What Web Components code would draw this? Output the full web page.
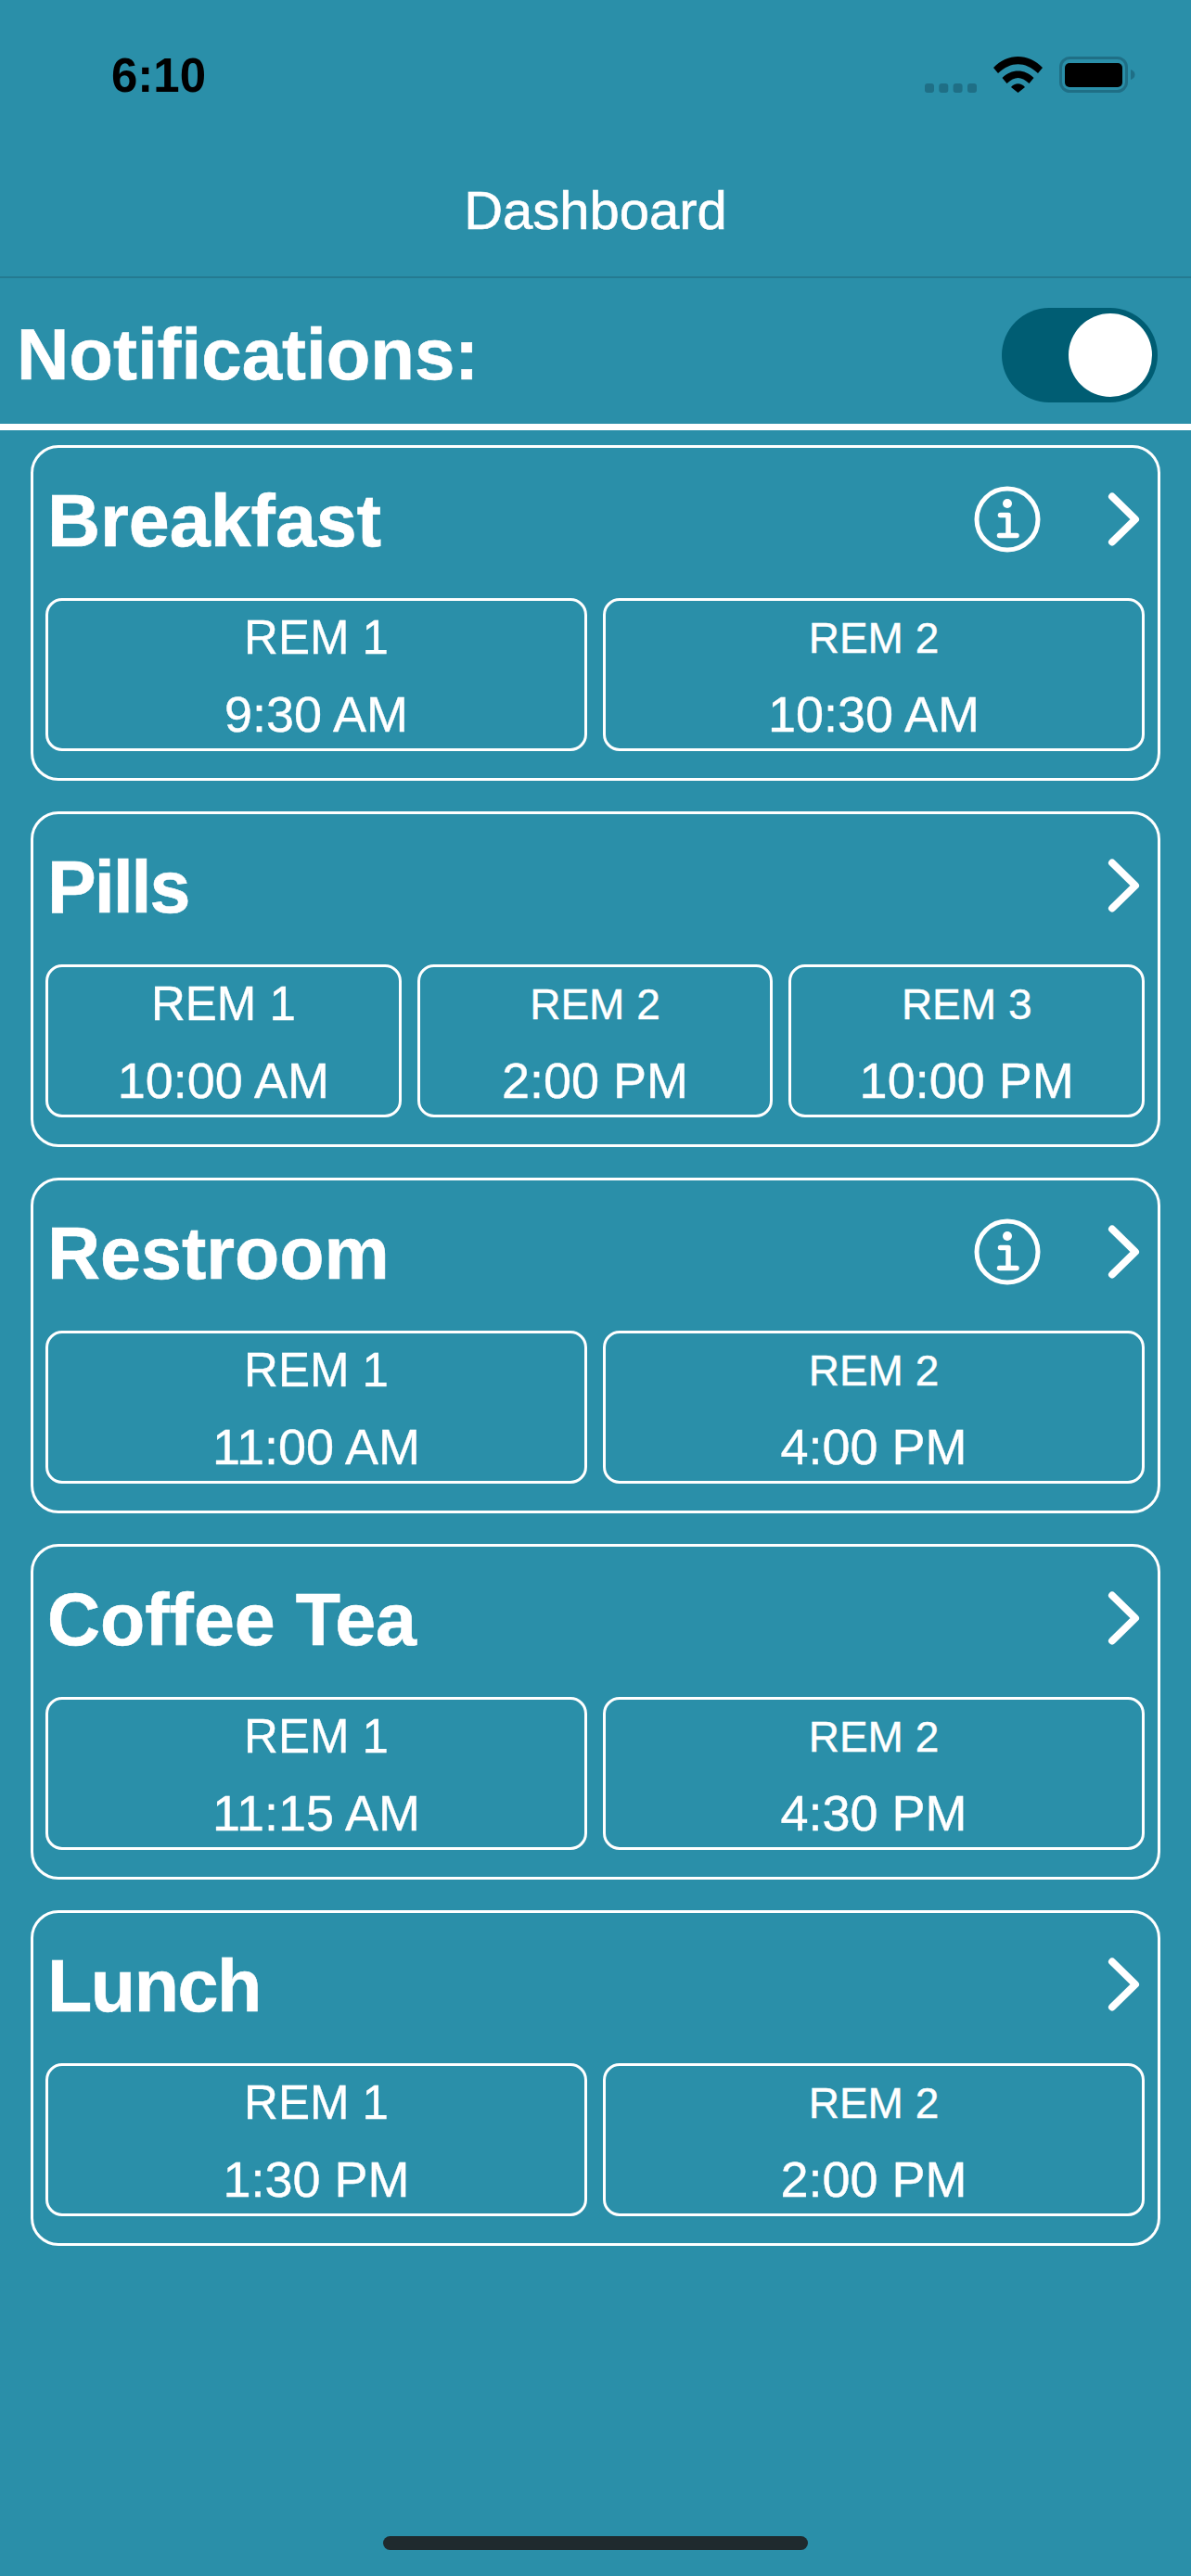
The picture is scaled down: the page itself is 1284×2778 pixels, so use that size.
<!DOCTYPE html>
<html>
<head>
<meta charset="utf-8">
<style>
html,body{margin:0;padding:0;height:100%;}
body{background:#2a8fa9;color:#fff;font-family:"Liberation Sans",Arial,sans-serif;}
</style>
</head>
<body>
<status-bar></status-bar>
<nav-bar>Dashboard</nav-bar>
<notify-row>Notifications:</notify-row>
<main style="display:block;padding:16px 33px 0 33px;">
  <meal-card name="Breakfast" info>
    <rem-box label="REM 1" time="9:30 AM"></rem-box>
    <rem-box label="REM 2" time="10:30 AM" small></rem-box>
  </meal-card>
  <meal-card name="Pills" style="--track:-2px">
    <rem-box label="REM 1" time="10:00 AM"></rem-box>
    <rem-box label="REM 2" time="2:00 PM" small></rem-box>
    <rem-box label="REM 3" time="10:00 PM" small></rem-box>
  </meal-card>
  <meal-card name="Restroom" info>
    <rem-box label="REM 1" time="11:00 AM"></rem-box>
    <rem-box label="REM 2" time="4:00 PM" small></rem-box>
  </meal-card>
  <meal-card name="Coffee Tea">
    <rem-box label="REM 1" time="11:15 AM"></rem-box>
    <rem-box label="REM 2" time="4:30 PM" small></rem-box>
  </meal-card>
  <meal-card name="Lunch" style="--track:-1.4px">
    <rem-box label="REM 1" time="1:30 PM"></rem-box>
    <rem-box label="REM 2" time="2:00 PM" small></rem-box>
  </meal-card>
</main>
<home-bar></home-bar>
<script>
class StatusBar extends HTMLElement{
  constructor(){
    super();
    this.attachShadow({mode:"open"});
    this.shadowRoot.innerHTML = `
    <style>
    :host{display:flex;height:132px;align-items:flex-start;justify-content:space-between;box-sizing:border-box;padding:56px 60px 0 120px;}
    .time{font:bold 51px/52px "Liberation Sans",Arial,sans-serif;color:#000;}
    .icons{display:flex;align-items:flex-start;gap:18px;margin-top:5px;}
    svg{display:block;}
    </style>
    <div class="time">6:10</div>
    <div class="icons">
      <svg width="56" height="39" viewBox="0 0 56 39">
        <g fill="#1f6f86"><rect x="0" y="29" width="10" height="10" rx="3"/><rect x="15.300" y="29" width="10" height="10" rx="3"/><rect x="30.600" y="29" width="10" height="10" rx="3"/><rect x="46" y="29" width="10" height="10" rx="3"/></g>
      </svg>
      <svg width="53" height="39" viewBox="0 0 53 39">
        <path d="M0 12 C15 -4 38 -4 53 12 L48 18 C34 5 19 5 5 18Z M9.500 23 C19 13 34 13 43.500 23 L38.500 29 C30 21 23 21 14.500 29Z M19 33 C23 28 30 28 34 33 L26.500 39Z" fill="#000"/>
      </svg>
      <svg width="82" height="39" viewBox="0 0 82 39">
        <rect x="1.500" y="1.500" width="71" height="36" rx="10" fill="none" stroke="#1f6f86" stroke-width="3"/>
        <rect x="6" y="7" width="62" height="26" rx="5" fill="#000"/>
        <path d="M77 14 C83 16 83 23 77 25Z" fill="#1f6f86"/>
      </svg>
    </div>`;
  }
}
class NavBar extends HTMLElement{
  constructor(){
    super();
    this.attachShadow({mode:"open"});
    this.shadowRoot.innerHTML = `
    <style>
    :host{display:flex;height:168px;box-sizing:border-box;align-items:center;justify-content:center;border-bottom:2px solid #247a91;padding-top:22px;font-size:58px;-webkit-text-stroke:.6px #fff;color:#fff;}
    </style>
    <slot></slot>`;
  }
}
class NotifyRow extends HTMLElement{
  constructor(){
    super();
    this.attachShadow({mode:"open"});
    this.shadowRoot.innerHTML = `
    <style>
    :host{display:flex;height:164px;box-sizing:border-box;align-items:center;justify-content:space-between;padding:8px 36px 0 18px;border-bottom:7px solid #fff;font-weight:bold;font-size:78px;-webkit-text-stroke:.6px #fff;color:#fff;}
    .toggle{width:168px;height:102px;border-radius:51px;background:#005d73;display:flex;align-items:center;justify-content:flex-end;padding-right:6px;box-sizing:border-box;}
    .knob{width:90px;height:90px;border-radius:50%;background:#fff;}
    </style>
    <slot></slot>
    <div class="toggle"><div class="knob"></div></div>`;
  }
}
class MealCard extends HTMLElement{
  constructor(){
    super();
    this.attachShadow({mode:"open"});
    const info = this.hasAttribute('info') ? `
      <svg width="72" height="72" viewBox="0 0 72 72" fill="none" stroke="#fff" class="info">
        <circle cx="36" cy="36" r="33" stroke-width="5"/>
        <circle cx="36" cy="19" r="5" fill="#fff" stroke="none"/>
        <path d="M28.500 31.500H37V53.500M27.500 53.500H46" stroke-width="5.500" stroke-linecap="round" stroke-linejoin="round"/>
      </svg>` : '';
    this.shadowRoot.innerHTML = `
    <style>
    :host{display:block;box-sizing:border-box;height:362px;border:3px solid #fff;border-radius:30px;margin-bottom:33px;padding:0 14px 0 13px;}
    .head{display:flex;align-items:center;height:162px;box-sizing:border-box;padding-bottom:4px;}
    .name{flex:1;font-weight:bold;font-size:79px;letter-spacing:var(--track,0);-webkit-text-stroke:.6px #fff;color:#fff;padding-left:2px;}
    .info{margin:0 71px 5px 0;display:block;}
    .chev{display:block;margin:0 1px 5px 0;}
    .row{display:flex;gap:17px;}
    ::slotted(rem-box){flex:1 1 0;}
    </style>
    <div class="head">
      <div class="name">${this.getAttribute('name')}</div>
      ${info}
      <svg class="chev" width="40" height="60" viewBox="0 0 40 60" fill="none" stroke="#fff" stroke-width="8" stroke-linecap="round" stroke-linejoin="round">
        <path d="M6 5.500L31 30L6 54.500"/>
      </svg>
    </div>
    <div class="row"><slot></slot></div>`;
  }
}
class RemBox extends HTMLElement{
  constructor(){
    super();
    this.attachShadow({mode:"open"});
    const size = this.hasAttribute('small') ? 46 : 51;
    this.shadowRoot.innerHTML = `
    <style>
    :host{display:flex;flex-direction:column;align-items:center;box-sizing:border-box;height:165px;border:3px solid #fff;border-radius:18px;color:#fff;min-width:0;-webkit-text-stroke:.4px #fff;}
    .label{font-size:${size}px;line-height:58px;margin-top:11px;}
    .time{font-size:54px;line-height:58px;margin-top:24px;}
    </style>
    <div class="label">${this.getAttribute('label')}</div>
    <div class="time">${this.getAttribute('time')}</div>`;
  }
}
class HomeBar extends HTMLElement{
  constructor(){
    super();
    this.attachShadow({mode:"open"});
    this.shadowRoot.innerHTML = `
    <style>
    :host{position:absolute;left:0;right:0;top:2735px;display:flex;justify-content:center;}
    div{width:458px;height:15px;border-radius:8px;background:#1f2a2e;}
    </style>
    <div></div>`;
  }
}
customElements.define('status-bar',StatusBar);
customElements.define('nav-bar',NavBar);
customElements.define('notify-row',NotifyRow);
customElements.define('meal-card',MealCard);
customElements.define('rem-box',RemBox);
customElements.define('home-bar',HomeBar);
</script>
</body>
</html>
